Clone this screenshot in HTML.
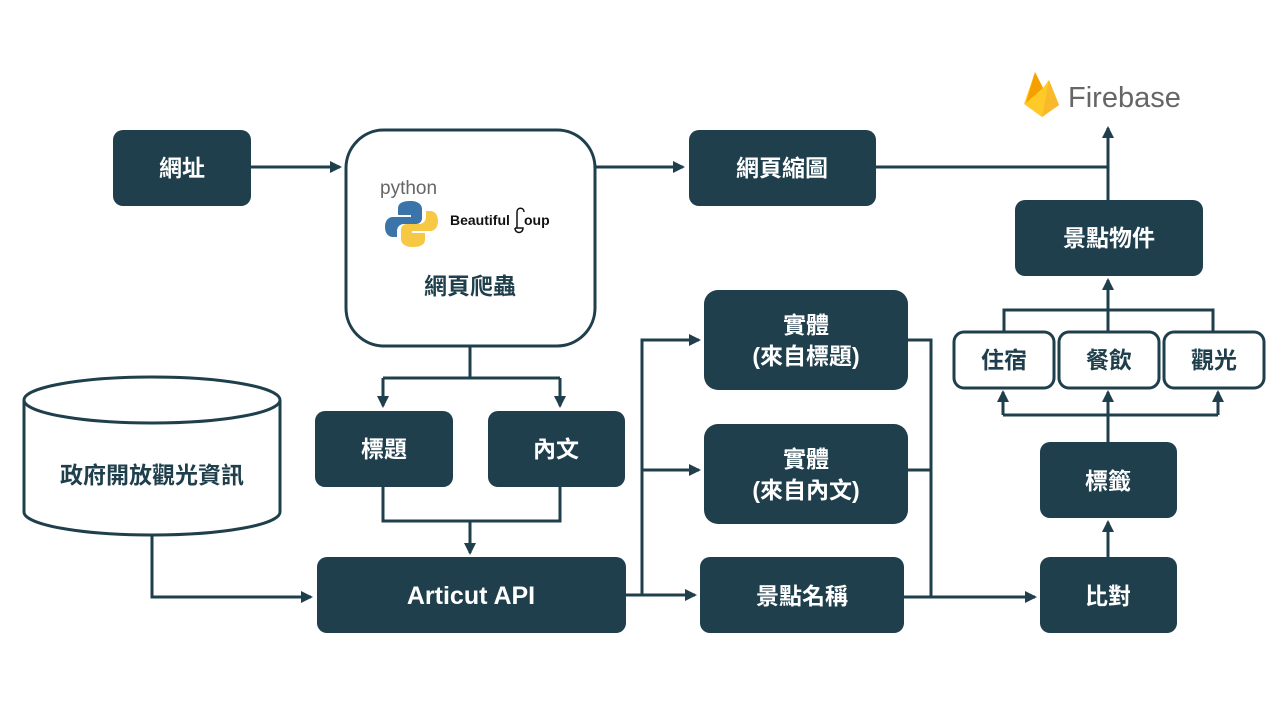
<!DOCTYPE html>
<html><head><meta charset="utf-8"><style>
html,body{margin:0;padding:0;background:#fff;width:1280px;height:720px;overflow:hidden}
text{font-family:"Liberation Sans","Noto Sans CJK TC",sans-serif}
</style></head><body>
<svg width="1280" height="720" viewBox="0 0 1280 720" xmlns="http://www.w3.org/2000/svg">
<defs>
<marker id="b" markerWidth="12" markerHeight="12" refX="10" refY="6" orient="auto" markerUnits="userSpaceOnUse"><path d="M0,0 L12,6 L0,12 Z" fill="#1f3f4c"/></marker></defs>
<g fill="none" stroke="#1f3f4c" stroke-width="3">
<path d="M251,167 H340" marker-end="url(#b)"/>
<path d="M595,167 H683" marker-end="url(#b)"/>
<path d="M876,167 H1108"/>
<path d="M1108,200 V128" marker-end="url(#b)"/>
<path d="M1108,332 V280" marker-end="url(#b)"/>
<path d="M1004,332 V310 H1213 V332"/>
<path d="M1108,442 V392" marker-end="url(#b)"/>
<path d="M1003,415 H1218"/>
<path d="M1003,415 V392" marker-end="url(#b)"/>
<path d="M1218,415 V392" marker-end="url(#b)"/>
<path d="M1108,557 V522" marker-end="url(#b)"/>
<path d="M470,346 V378 M383,378 H560"/>
<path d="M383,378 V406" marker-end="url(#b)"/>
<path d="M560,378 V406" marker-end="url(#b)"/>
<path d="M383,487 V521 H560 V487"/>
<path d="M470,521 V553" marker-end="url(#b)"/>
<path d="M152,535 V597 H311" marker-end="url(#b)"/>
<path d="M626,595 H695" marker-end="url(#b)"/>
<path d="M642,595 V340 H699" marker-end="url(#b)"/>
<path d="M642,470 H699" marker-end="url(#b)"/>
<path d="M908,340 H931 V597 M908,470 H931"/>
<path d="M904,597 H1035" marker-end="url(#b)"/>
</g>
<g fill="#1f3f4c">
<rect x="113" y="130" width="138" height="76" rx="10"/>
<rect x="689" y="130" width="187" height="76" rx="10"/>
<rect x="1015" y="200" width="188" height="76" rx="10"/>
<rect x="315" y="411" width="138" height="76" rx="10"/>
<rect x="488" y="411" width="137" height="76" rx="10"/>
<rect x="317" y="557" width="309" height="76" rx="10"/>
<rect x="704" y="290" width="204" height="100" rx="14"/>
<rect x="704" y="424" width="204" height="100" rx="14"/>
<rect x="700" y="557" width="204" height="76" rx="10"/>
<rect x="1040" y="442" width="137" height="76" rx="10"/>
<rect x="1040" y="557" width="137" height="76" rx="10"/>
</g>
<g fill="#fff" stroke="#1f3f4c" stroke-width="3">
<rect x="346" y="130" width="249" height="216" rx="38"/>
<rect x="954" y="332" width="100" height="56" rx="10"/>
<rect x="1059" y="332" width="100" height="56" rx="10"/>
<rect x="1164" y="332" width="100" height="56" rx="10"/>
<path d="M24,400 V512 A128,23 0 0 0 280,512 V400"/>
<ellipse cx="152" cy="400" rx="128" ry="23"/>
</g>
<g fill="#fff" font-size="23" font-weight="bold" text-anchor="middle">
<text x="182" y="176">網址</text>
<text x="782" y="176">網頁縮圖</text>
<text x="1109" y="246">景點物件</text>
<text x="384" y="457">標題</text>
<text x="556" y="457">內文</text>
<text x="471" y="604" font-size="25">Articut API</text>
<text x="806" y="333">實體</text>
<text x="806" y="364">(來自標題)</text>
<text x="806" y="467">實體</text>
<text x="806" y="498">(來自內文)</text>
<text x="802" y="604">景點名稱</text>
<text x="1108" y="489">標籤</text>
<text x="1108" y="604">比對</text>
</g>
<g fill="#1f3f4c" font-size="23" font-weight="bold" text-anchor="middle">
<text x="470" y="294">網頁爬蟲</text>
<text x="1004" y="368">住宿</text>
<text x="1109" y="368">餐飲</text>
<text x="1214" y="368">觀光</text>
<text x="152" y="483">政府開放觀光資訊</text>
</g>
<text x="380" y="194" font-size="19" fill="#666">python</text>
<path d="M411,201 c-10,0 -13,3 -13,8 v6 h13 v2 h-18 c-5,0 -8,4 -8,10 c0,6 3,10 8,10 h4 v-6 c0,-4 3,-7 7,-7 h12 c4,0 6,-3 6,-6 v-9 c0,-5 -5,-8 -11,-8z" fill="#3b74a8"/>
<path d="M412,247 c10,0 13,-3 13,-8 v-6 h-13 v-2 h18 c5,0 8,-4 8,-10 c0,-6 -3,-10 -8,-10 h-4 v6 c0,4 -3,7 -7,7 h-12 c-4,0 -6,3 -6,6 v9 c0,5 5,8 11,8z" fill="#f7c843"/>
<text x="450" y="225" font-size="14" font-weight="bold" fill="#111">Beautiful</text>
<path d="M517,228 V212 c0,-5 7,-5 7,0 M515,228 h8 c0,6 -8,6 -8,0" fill="none" stroke="#111" stroke-width="1.5"/>
<text x="524" y="225" font-size="14" font-weight="bold" fill="#111">oup</text>
<path d="M1024,104 L1035,72 L1043,88 L1049,80 L1059,105 L1042,117 Z" fill="#ffca28"/>
<path d="M1035,72 L1043,88 L1026,103 Z" fill="#f6a000"/>
<path d="M1049,80 L1059,105 L1042,117 Z" fill="#f8b92a"/>
<text x="1068" y="107" font-size="29" fill="#666">Firebase</text>
</svg>
</body></html>
